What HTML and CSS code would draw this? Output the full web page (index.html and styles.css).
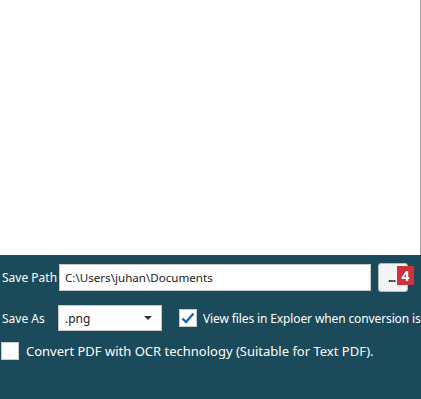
FILE: index.html
```html
<!DOCTYPE html>
<html>
<head>
<meta charset="utf-8">
<link rel="stylesheet" href="styles.css">
</head>
<body>
<div class="preview"></div>
<div class="panel">
  <div class="row row-path">
    <span class="label">Save Path</span>
    <div class="input">C:\Users\juhan\Documents</div>
    <div class="browse">
      <span class="dots">...</span>
      <span class="badge">4</span>
    </div>
  </div>
  <div class="row row-as">
    <span class="label label-as">Save As</span>
    <div class="combo"><span>.png</span><svg class="arrow" width="8" height="4" viewBox="0 0 8 4"><path d="M0 0h8L4 4z" fill="#333"/></svg></div>
    <div class="check checked"><svg width="14" height="12" viewBox="0 0 14 12"><path d="M1.5 6.5l3.5 3.5 7.5-8.5" fill="none" stroke="#1565c0" stroke-width="2.4"/></svg></div>
    <span class="text text-view">View files in Exploer when conversion is</span>
  </div>
  <div class="row row-ocr">
    <div class="check"></div>
    <span class="text">Convert PDF with OCR technology (Suitable for Text PDF).</span>
  </div>
</div>
</body>
</html>
```
FILE: styles.css
```css
html, body {
  margin: 0;
  padding: 0;
  width: 421px;
  height: 399px;
  overflow: hidden;
  font-family: "Noto Sans", "Open Sans", sans-serif;
  font-size: 12px;
}
.preview {
  height: 255px;
  background: #ffffff;
  border-right: 1px solid #a0a0a0;
  box-sizing: border-box;
}
.panel {
  height: 144px;
  background: #1b4a5a;
  color: #ffffff;
  padding-top: 8px;
  box-sizing: border-box;
  overflow: hidden;
}
.row {
  display: flex;
  align-items: center;
  white-space: nowrap;
}
.row > * {
  flex-shrink: 0;
}
.label {
  width: 57px;
  padding-left: 2px;
  box-sizing: border-box;
}
.row-path {
  height: 29px;
}
.input {
  width: 312px;
  height: 27px;
  margin-left: 2px;
  background: #fff;
  border: 1px solid #c8c8c8;
  box-sizing: border-box;
  color: #222;
  padding-left: 5px;
  line-height: 25px;
  font-size: 11.6px;
}
.browse {
  position: relative;
  width: 30px;
  height: 29px;
  margin-left: 7px;
  background: #f4f4f4;
  border: 1px solid #bbb;
  border-radius: 3px;
  box-sizing: border-box;
  color: #222;
}
.dots {
  position: absolute;
  left: 9px;
  top: 5px;
  font-weight: bold;
  letter-spacing: -1px;
}
.badge {
  position: absolute;
  left: 18px;
  top: 2px;
  width: 17px;
  height: 19px;
  background: #d0313c;
  color: #fff;
  font-weight: bold;
  font-size: 14px;
  line-height: 19px;
  text-align: center;
}
.row-as {
  margin-top: 13px;
  height: 26px;
}
.combo {
  width: 104px;
  height: 26px;
  margin-left: 1px;
  background: #fff;
  border: 1px solid #c8c8c8;
  box-sizing: border-box;
  color: #222;
  display: flex;
  align-items: center;
  justify-content: space-between;
  padding: 0 9px 0 6px;
}
.check {
  width: 18px;
  height: 18px;
  background: #fff;
  border: 1px solid #c8c8c8;
  box-sizing: border-box;
  display: flex;
  align-items: center;
  justify-content: center;
}
.row-as .check {
  margin-left: 17px;
}
.text {
  margin-left: 8px;
  font-size: 13px;
}
.text-view {
  margin-left: 6px;
  font-size: 12px;
  letter-spacing: -0.12px;
}
.row-ocr {
  margin-top: 11px;
  height: 18px;
}
.row-ocr .check {
  margin-left: 1px;
}
.row-ocr .text {
  margin-left: 7px;
}
```
